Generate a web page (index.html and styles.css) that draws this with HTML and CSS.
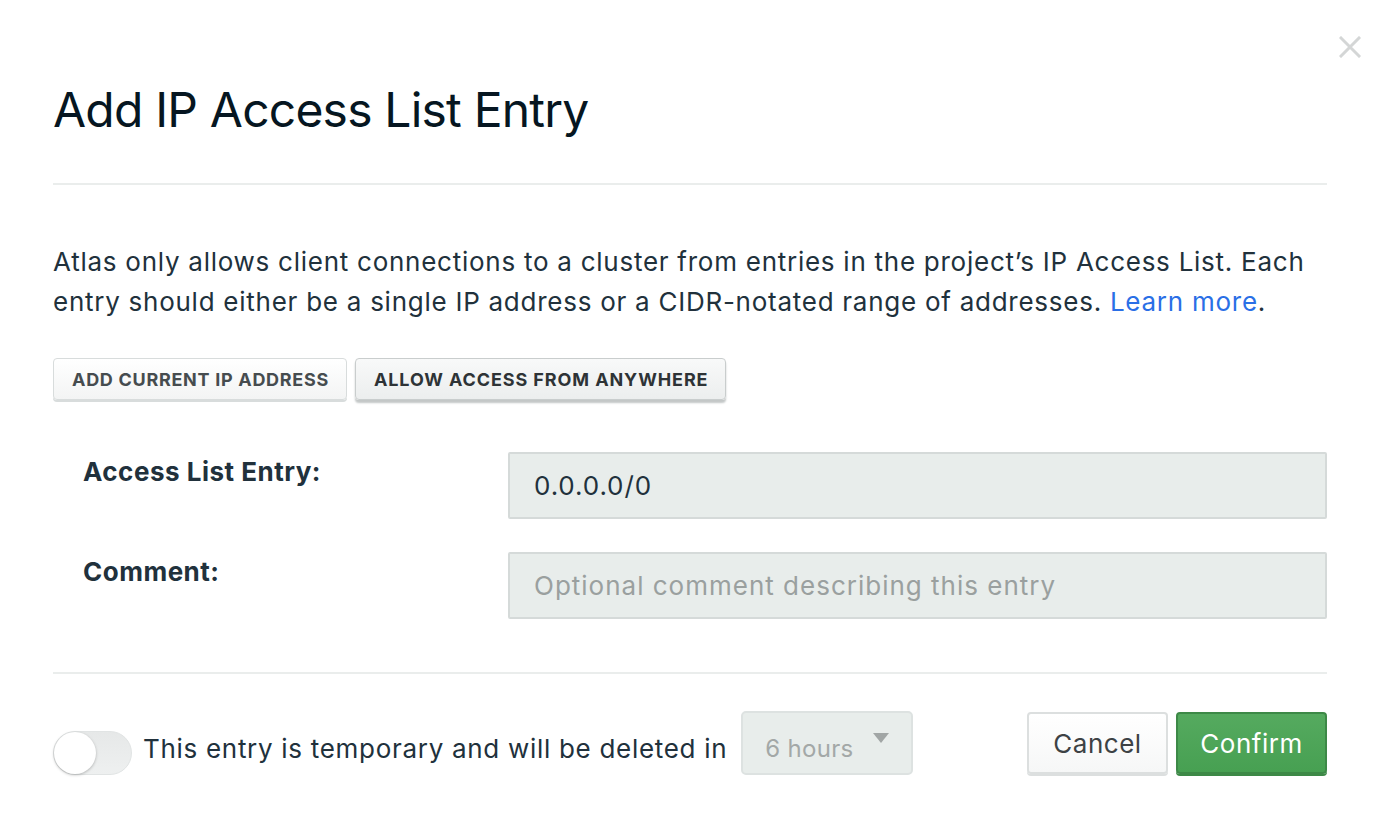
FILE: index.html
```html
<!DOCTYPE html>
<html>
<head>
<meta charset="utf-8">
<link rel="stylesheet" href="styles.css">
</head>
<body>
<div class="modal">
  <button class="close" aria-label="Close">
    <svg width="22" height="22" viewBox="0 0 22 22"><path d="M2 2 L20 20 M20 2 L2 20" stroke="#d4d6d6" stroke-width="3" stroke-linecap="square"/></svg>
  </button>
  <h1 class="title">Add IP Access List Entry</h1>
  <hr class="divider">
  <p class="desc">Atlas only allows client connections to a cluster from entries in the project’s IP Access List. Each entry should either be a single IP address or a CIDR-notated range of addresses. <a href="#">Learn more</a>.</p>
  <div class="actions">
    <button class="btn-caps">ADD CURRENT IP ADDRESS</button>
    <button class="btn-caps active">ALLOW ACCESS FROM ANYWHERE</button>
  </div>
  <div class="form">
    <div class="row">
      <label class="label">Access List Entry:</label>
      <div class="input">0.0.0.0/0</div>
    </div>
    <div class="row">
      <label class="label">Comment:</label>
      <div class="input placeholder">Optional comment describing this entry</div>
    </div>
  </div>
  <hr class="divider lower">
  <div class="footer">
    <div class="temp">
      <span class="toggle"><span class="knob"></span></span>
      <span class="temp-text">This entry is temporary and will be deleted in</span>
      <span class="select">6 hours<span class="caret"></span></span>
    </div>
    <div class="buttons">
      <button class="btn cancel">Cancel</button>
      <button class="btn confirm">Confirm</button>
    </div>
  </div>
</div>
</body>
</html>
```
FILE: styles.css
```css
* { box-sizing: border-box; }
html, body { margin: 0; padding: 0; background: #fff; }
body { font-family: "Inter", "Noto Sans", sans-serif; color: #21313c; }
.modal {
  position: relative;
  width: 1380px;
  height: 826px;
  padding: 80px 53px 0 53px;
}
.close {
  position: absolute;
  top: 36px;
  right: 19px;
  background: none;
  border: none;
  padding: 0;
  width: 22px;
  height: 22px;
}
.title {
  margin: 0;
  font-weight: 400;
  font-size: 48px;
  line-height: 60px;
  color: #061621;
  letter-spacing: -0.8px;
}
.divider {
  margin: 43px 0 0 0;
  border: none;
  border-top: 2px solid #eaedec;
  height: 0;
}
.desc {
  margin: 57px 0 0 0;
  font-size: 26px;
  line-height: 40px;
  color: #21313c;
  letter-spacing: 0.74px;
}
.desc a { color: #2a6fe6; text-decoration: none; }
.actions {
  display: flex;
  gap: 8px;
  margin-top: 36px;
}
.btn-caps {
  height: 42px;
  padding: 0 17px 0 18px;
  font-family: inherit;
  font-size: 18px;
  font-weight: 700;
  color: #464c4f;
  background: linear-gradient(#ffffff, #f3f4f4);
  border: 1px solid #d8dcdc;
  border-radius: 4px;
  box-shadow: 0 2px 0 #d8dcdc;
  letter-spacing: 0.7px;
}
.btn-caps.active {
  color: #2e3336;
  background: linear-gradient(#f8f9f9, #eceeee);
  border-color: #c9cdcd;
  box-shadow: 0 3px 2px #c3c7c7;
  letter-spacing: 0.9px;
}
.form { margin-top: 52px; display: flex; flex-direction: column; gap: 33px; }
.row { display: flex; align-items: flex-start; }
.label {
  width: 455px;
  padding-left: 30px;
  padding-top: 4px;
  font-size: 26px;
  font-weight: 700;
  line-height: 32px;
  color: #21313c;
  letter-spacing: 0.5px;
}
.input {
  flex: 1;
  height: 67px;
  background: #e8edeb;
  border: 2px solid #d5dad9;
  border-radius: 2px;
  padding: 0 24px;
  display: flex;
  align-items: center;
  font-size: 26px;
  color: #21313c;
  letter-spacing: 0.9px;
}
.input.placeholder { color: #9aa09f; letter-spacing: 1px; }
.lower { margin-top: 53px; }
.footer {
  display: flex;
  justify-content: space-between;
  align-items: center;
  margin-top: 37px;
}
.temp { display: flex; align-items: center; }
.toggle {
  position: relative;
  width: 79px;
  height: 44px;
  border-radius: 22px;
  background: linear-gradient(#e6e8e8, #eef0f0);
  border: 1px solid #e1e4e4;
  margin-top: 20px;
}
.knob {
  position: absolute;
  left: 0;
  top: 0;
  width: 42px;
  height: 42px;
  border-radius: 50%;
  background: #fff;
  box-shadow: 0 1px 3px rgba(0,0,0,0.25);
}
.temp-text {
  margin-left: 11px;
  font-size: 26px;
  margin-top: 10px;
  color: #21313c;
  letter-spacing: 0.7px;
}
.select {
  position: relative;
  margin-left: 14px;
  width: 172px;
  height: 64px;
  background: #e8edeb;
  border: 2px solid #dde2e1;
  border-radius: 5px;
  padding: 0 22px;
  display: flex;
  align-items: center;
  padding-top: 10px;
  font-size: 24px;
  color: #a3a8a7;
  letter-spacing: 0.3px;
}
.caret {
  position: absolute;
  right: 22px;
  top: 20px;
  width: 0;
  height: 0;
  border-left: 8px solid transparent;
  border-right: 8px solid transparent;
  border-top: 10px solid #a1a6a5;
}
.buttons { display: flex; gap: 8px; }
.btn {
  height: 62px;
  font-family: inherit;
  font-size: 26px;
  border-radius: 4px;
  padding: 0 18px;
  letter-spacing: 0.5px;
}
.cancel {
  color: #3d4245;
  background: linear-gradient(#ffffff, #f6f7f7);
  border: 2px solid #dcdfdf;
  box-shadow: 0 2px 0 #dcdfdf;
  width: 141px;
}
.confirm {
  color: #fff;
  background: linear-gradient(#55aa5f, #47a052);
  border: 2px solid #3d8947;
  box-shadow: 0 2px 0 #3d8947;
  width: 151px;
}
```
